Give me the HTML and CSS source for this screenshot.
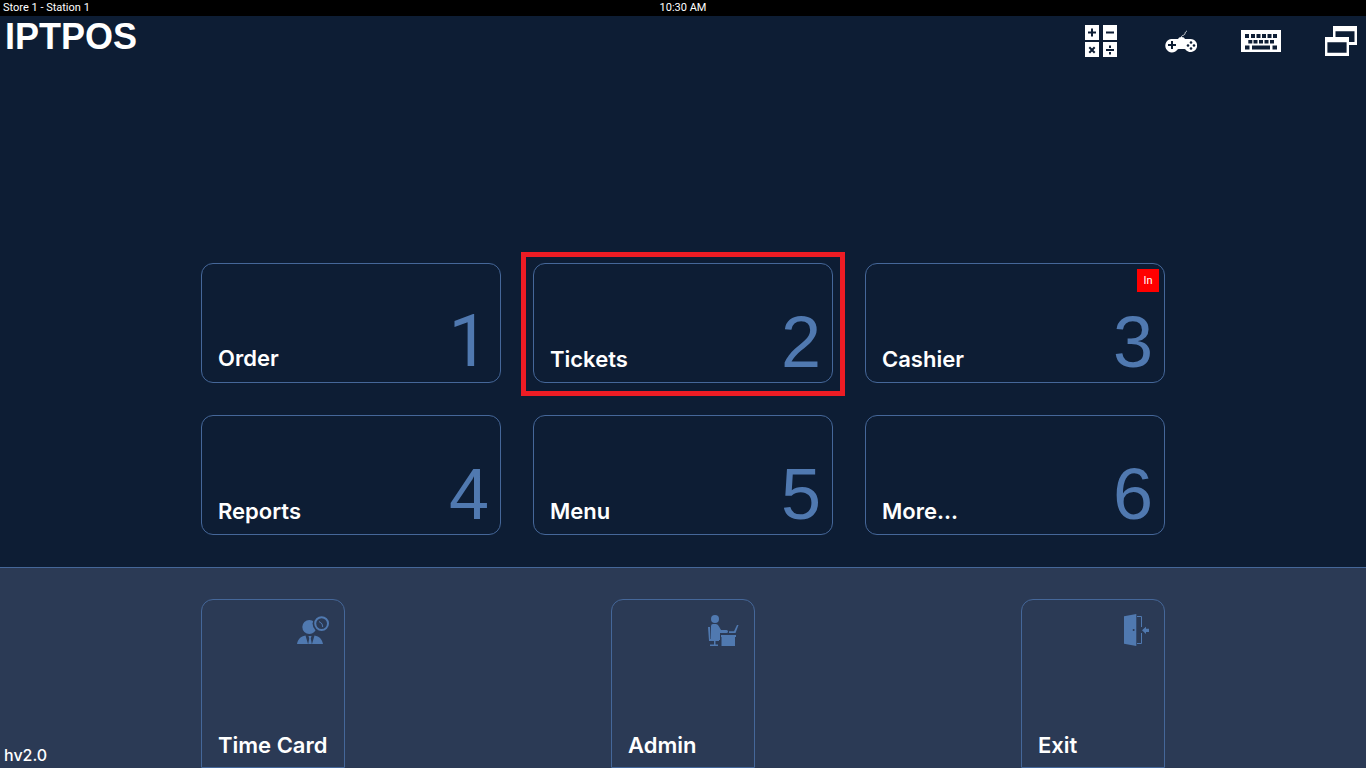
FILE: index.html
```
<!DOCTYPE html>
<html lang="en">
<head>
    <meta charset="UTF-8">
    <meta name="viewport" content="width=device-width, initial-scale=1.0">
    <title>IPTPOS</title>
    <link rel="stylesheet" href="styles.css">
</head>
<body>
    <div class="status">
        <span class="station">Store 1 - Station 1</span>
        <span class="clock">10:30 AM</span>
    </div>
    <header class="header">
        <h1 class="title">IPTPOS</h1>
        <div class="tools">
            <button type="button" class="tool" aria-label="Calculator">
                <svg width="32" height="32" viewBox="0 0 32 32">
                    <path fill="#fff" d="M0 0h14v15H0zM18 0h14v15H18zM0 17h14v15H0zM18 17h14v15H18z"/>
                    <path stroke="#0d1d34" stroke-width="2" fill="none" d="M3 7.500h8M7 3.500v8M21 7.500h8M4.300 22.300l5.400 5.400M9.700 22.300l-5.400 5.400M21 25h8M25 20.500v2.500M25 27v2.500"/>
                </svg>
            </button>
            <button type="button" class="tool" aria-label="Games">
                <svg width="32" height="32" viewBox="0 0 32 32">
                    <path stroke="#fff" stroke-opacity=".8" fill="none" d="M16.500 13c-.5-4 3-1.500 3.500-4.500.3-1.500 1-2 2-2.500"/>
                    <path fill="#fff" d="M6.500 14h6.500q.5-2 3.500-2t3.500 2h5.500a6.500 6.500 0 1 1-5 10.500l-1-.5h-6l-1 .5A6.700 6.700 0 1 1 6.500 14z"/>
                    <path stroke="#0d1d34" stroke-width="2" fill="none" d="M3 20h8M7 16v8"/>
                    <g fill="#0d1d34"><circle cx="26" cy="17.500" r="1.300"/><circle cx="26" cy="23.500" r="1.300"/><circle cx="23" cy="20.500" r="1.300"/><circle cx="29" cy="20.500" r="1.300"/></g>
                </svg>
            </button>
            <button type="button" class="tool" aria-label="Keyboard">
                <svg width="40" height="22" viewBox="0 0 40 22">
                    <path fill="#fff" d="M0 0h40v22H0z"/>
                    <path fill="#0d1d34" d="M4 4h4v4H4zM10 4h4v4h-4zM15.500 4h4v4h-4zM21 4h4v4h-4zM26.500 4h4v4h-4zM32 4h4v4h-4zM7.300 10h4v3.500h-4zM12.500 10h4v3.500h-4zM18 10h4v3.500h-4zM23.500 10h4v3.500h-4zM29 10h4v3.500h-4zM4 15.500h4.500v4H4zM11 15.500h18v4H11zM31.500 15.500H36v4h-4.500z"/>
                </svg>
            </button>
            <button type="button" class="tool" aria-label="Windows">
                <svg width="32" height="30" viewBox="0 0 32 30">
                    <path fill="#fff" fill-rule="evenodd" d="M8 0h24v19H24v-3h5.500V5.300h-19V11H8z"/>
                    <path fill="#fff" fill-rule="evenodd" d="M0 11h24v19H0zM2.400 16.300v10.400h19.200V16.300z"/>
                </svg>
            </button>
        </div>
    </header>
    <main class="menu">
        <button type="button" class="card"><span>Order</span><span class="number plain">1</span></button>
        <button type="button" class="card selected"><span>Tickets</span><span class="number">2</span></button>
        <button type="button" class="card"><span>Cashier</span><span class="number">3</span><span class="badge">In</span></button>
        <button type="button" class="card"><span>Reports</span><span class="number">4</span></button>
        <button type="button" class="card"><span>Menu</span><span class="number">5</span></button>
        <button type="button" class="card"><span>More...</span><span class="number">6</span></button>
    </main>
    <footer class="footer">
        <span class="version">hv2.0</span>
        <div class="actions">
            <button type="button" class="action">
                <svg width="32" height="32" viewBox="0 0 32 32" fill="#5079b0">
                    <circle cx="12.300" cy="13" r="7"/>
                    <path d="M0 30c1-5 3.500-7.500 8.500-8.500l2.500 8.500zM26 30c-1-5-3.500-7.500-8.500-8.500L15 30zM11.500 22h3l-.7 2.500 1 5.500h-3.600l1-5.500z"/>
                    <circle cx="24.600" cy="9.600" r="9" fill="#2b3a55"/>
                    <circle cx="24.600" cy="9.600" r="6.400" fill="none" stroke="#5079b0" stroke-width="2"/>
                    <path d="M22 7.500l3 2.300.7 3.200" fill="none" stroke="#5079b0"/>
                </svg>
                <span>Time Card</span>
            </button>
            <button type="button" class="action">
                <svg width="32" height="32" viewBox="0 0 32 32" fill="#5079b0">
                    <circle cx="8" cy="5" r="4"/>
                    <path d="M4 12q0-2 2-2h3q2 0 3 2.500l2 3.500h5.500q1.500 0 1.500 1.500T19.500 19H13v7H4z"/>
                    <path d="M1 13h2l.5 12H12v2H2z"/>
                    <path d="M7 26h1.500v4.500H11V32H3v-1.500h4z"/>
                    <path d="M22 17.300h5L30 11h1.500L28.500 19H22zM14 21h15v2H14zM14.500 23H28v9H14.500z"/>
                </svg>
                <span>Admin</span>
            </button>
            <button type="button" class="action">
                <svg width="32" height="32" viewBox="0 0 32 32" fill="#5079b0">
                    <path d="M7 2.300L19.300 0v32L7 29.700z"/>
                    <circle cx="16.600" cy="16" r="1" fill="#2b3a55"/>
                    <path d="M20 2.500h4.500v10.500M24.500 19v10.500H20" fill="none" stroke="#5079b0"/>
                    <path d="M25 16.300l4-3.500v2h3v3.200h-3v2z"/>
                </svg>
                <span>Exit</span>
            </button>
        </div>
    </footer>
</body>
</html>
```
FILE: styles.css
```
*{
    box-sizing: border-box;
}
body{
    margin: 0;
    min-height: 100vh;
    display: flex;
    flex-direction: column;
    background-color: #0d1d34;
    color: #fff;
    font-family: Inter, "Liberation Sans", sans-serif;
}
button{
    padding: 0;
    border: 0;
    background: none;
    color: inherit;
    font: inherit;
    cursor: pointer;
}
svg{
    display: block;
}
.status{
    display: grid;
    grid-template-columns: 1fr auto 1fr;
    padding: 0 3px;
    background-color: #000;
    font: 11px/16px Roboto, sans-serif;
}
.header{
    flex: 1;
    display: flex;
    justify-content: space-between;
    align-items: flex-start;
    padding: 0 1px 0 5px;
}
.title{
    margin: 0;
    font: bold 36px/42px "Liberation Sans", sans-serif;
}
.tools{
    display: flex;
    gap: 32px;
}
.tool{
    width: 48px;
    height: 50px;
    display: flex;
    align-items: center;
    justify-content: center;
}
.menu{
    width: 100%;
    max-width: 964px;
    margin: 0 auto 32px;
    display: grid;
    grid-template-columns: repeat(3, 1fr);
    gap: 32px;
}
.card{
    height: 120px;
    padding: 37px 11px 0 16px;
    display: flex;
    align-items: baseline;
    justify-content: space-between;
    border: 1px solid #456799;
    border-radius: 12px;
    font-size: 22px;
    font-weight: 600;
    position: relative;
}
/* square frame around the selected card */
.selected::before{
    content: "";
    position: absolute;
    inset: -12px -13px -14px;
    border: 5px solid #ed1c24;
}
.number{
    color: #5079b0;
    font: 72px/82px "Liberation Sans", sans-serif;
}
/* Roboto draws the 1 without a foot */
.plain{
    font-family: Roboto, sans-serif;
}
.badge{
    position: absolute;
    top: 5px;
    right: 5px;
    width: 22px;
    background-color: #f00;
    font: 11px/23px Roboto, sans-serif;
    text-align: center;
}
.footer{
    display: grid;
    grid-template-columns: 1fr minmax(0, 964px) 1fr;
    padding-top: 31px;
    border-top: 1px solid #456799;
    background-color: #2b3a55;
}
.version{
    align-self: end;
    padding: 0 4px;
    font-size: 16px;
    font-weight: 500;
    line-height: 26px;
}
.actions{
    display: flex;
    justify-content: space-between;
}
.action{
    width: 144px;
    height: 169px;
    padding: 14px 15px 8px 16px;
    display: flex;
    flex-direction: column;
    justify-content: space-between;
    border: 1px solid #456799;
    border-radius: 12px 12px 0 0;
    font-size: 22px;
    font-weight: 600;
    line-height: 28px;
    white-space: nowrap;
}
.action svg{
    align-self: flex-end;
}
.action span{
    align-self: flex-start;
}
```
